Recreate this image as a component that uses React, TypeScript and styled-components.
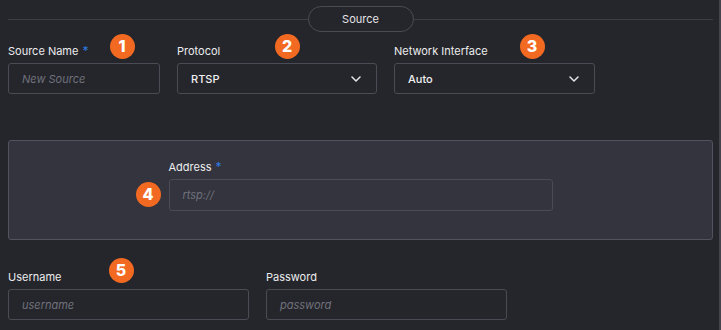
import React from "react";
import styled, { createGlobalStyle } from "styled-components";

const Global = createGlobalStyle`
  html, body { margin: 0; padding: 0; background: #25262b; }
  body { font-family: Inter, "Noto Sans", "Liberation Sans", sans-serif; }
  * { box-sizing: border-box; }
`;

const Page = styled.div`
  position: relative;
  width: 721px;
  height: 330px;
  padding: 6px 8px 0 8px;
  background: #25262b;
  border-right: 2px solid #44454c;
  overflow: hidden;
`;

const Header = styled.div`
  display: flex;
  align-items: center;
  width: 705px;
  height: 26px;
`;

const Rule = styled.div`
  flex: 1;
  height: 1px;
  background: #3d3e45;
`;

const Pill = styled.div`
  width: 106px;
  height: 26px;
  border: 1px solid #4a4b53;
  border-radius: 13px;
  display: flex;
  align-items: center;
  justify-content: center;
  color: #e4e4e7;
  font-size: 11px;
`;

const Row = styled.div<{ $top: number }>`
  display: flex;
  gap: 17px;
  margin-top: ${(p) => p.$top}px;
`;

const Field = styled.div<{ $w: number }>`
  position: relative;
  width: ${(p) => p.$w}px;
  display: flex;
  flex-direction: column;
`;

const Label = styled.div`
  height: 14px;
  line-height: 14px;
  font-size: 11px;
  color: #ececee;
  margin-bottom: 5px;
  white-space: nowrap;
`;

const Star = styled.span`
  color: #2f7be6;
  margin-left: 4px;
  font-size: 12px;
`;

const Box = styled.div<{ $h?: number }>`
  height: ${(p) => p.$h ?? 31}px;
  border: 1px solid #4a4b54;
  border-radius: 3px;
  display: flex;
  align-items: center;
  justify-content: space-between;
  padding: 0 15px 0 13px;
  font-size: 11px;
`;

const Placeholder = styled.span`
  font-style: italic;
  color: #6f717c;
`;

const Value = styled.span`
  color: #f0f0f2;
  font-weight: 500;
`;

const Panel = styled.div`
  margin-top: 46px;
  width: 705px;
  height: 100px;
  border: 1px solid #52535f;
  border-radius: 3px;
  background: #33343d;
  display: flex;
  justify-content: center;
  padding-top: 19px;
`;

const Badge = styled.div<{ $x: number; $y: number }>`
  position: absolute;
  left: ${(p) => p.$x - 12.5}px;
  top: ${(p) => p.$y - 12.5}px;
  width: 25px;
  height: 25px;
  border-radius: 50%;
  background: #f26a22;
  color: #fff;
  font-weight: 800;
  font-size: 16px;
  display: flex;
  align-items: center;
  justify-content: center;
`;

const Chevron = () => (
  <svg width="10" height="6" viewBox="0 0 10 6" fill="none">
    <path d="M1 1l4 4 4-4" stroke="#e6e6e9" strokeWidth="1.5" strokeLinecap="round" strokeLinejoin="round" />
  </svg>
);

export default function App() {
  return (
    <>
      <Global />
      <Page>
        <Header>
          <Rule />
          <Pill>Source</Pill>
          <Rule />
        </Header>
        <Row $top={12}>
          <Field $w={152}>
            <Label>
              Source Name<Star>*</Star>
            </Label>
            <Box>
              <Placeholder>New Source</Placeholder>
            </Box>
          </Field>
          <Field $w={200}>
            <Label>Protocol</Label>
            <Box>
              <Value>RTSP</Value>
              <Chevron />
            </Box>
          </Field>
          <Field $w={201}>
            <Label>Network Interface</Label>
            <Box>
              <Value>Auto</Value>
              <Chevron />
            </Box>
          </Field>
        </Row>
        <Panel>
          <Field $w={384}>
            <Label>
              Address<Star>*</Star>
            </Label>
            <Box $h={32}>
              <Placeholder>rtsp://</Placeholder>
            </Box>
          </Field>
        </Panel>
        <Row $top={30}>
          <Field $w={241}>
            <Label>Username</Label>
            <Box>
              <Placeholder>username</Placeholder>
            </Box>
          </Field>
          <Field $w={241}>
            <Label>Password</Label>
            <Box>
              <Placeholder>password</Placeholder>
            </Box>
          </Field>
        </Row>
        <Badge $x={122} $y={46}>1</Badge>
        <Badge $x={287} $y={46}>2</Badge>
        <Badge $x={532} $y={46}>3</Badge>
        <Badge $x={148} $y={194}>4</Badge>
        <Badge $x={121} $y={270}>5</Badge>
      </Page>
    </>
  );
}
